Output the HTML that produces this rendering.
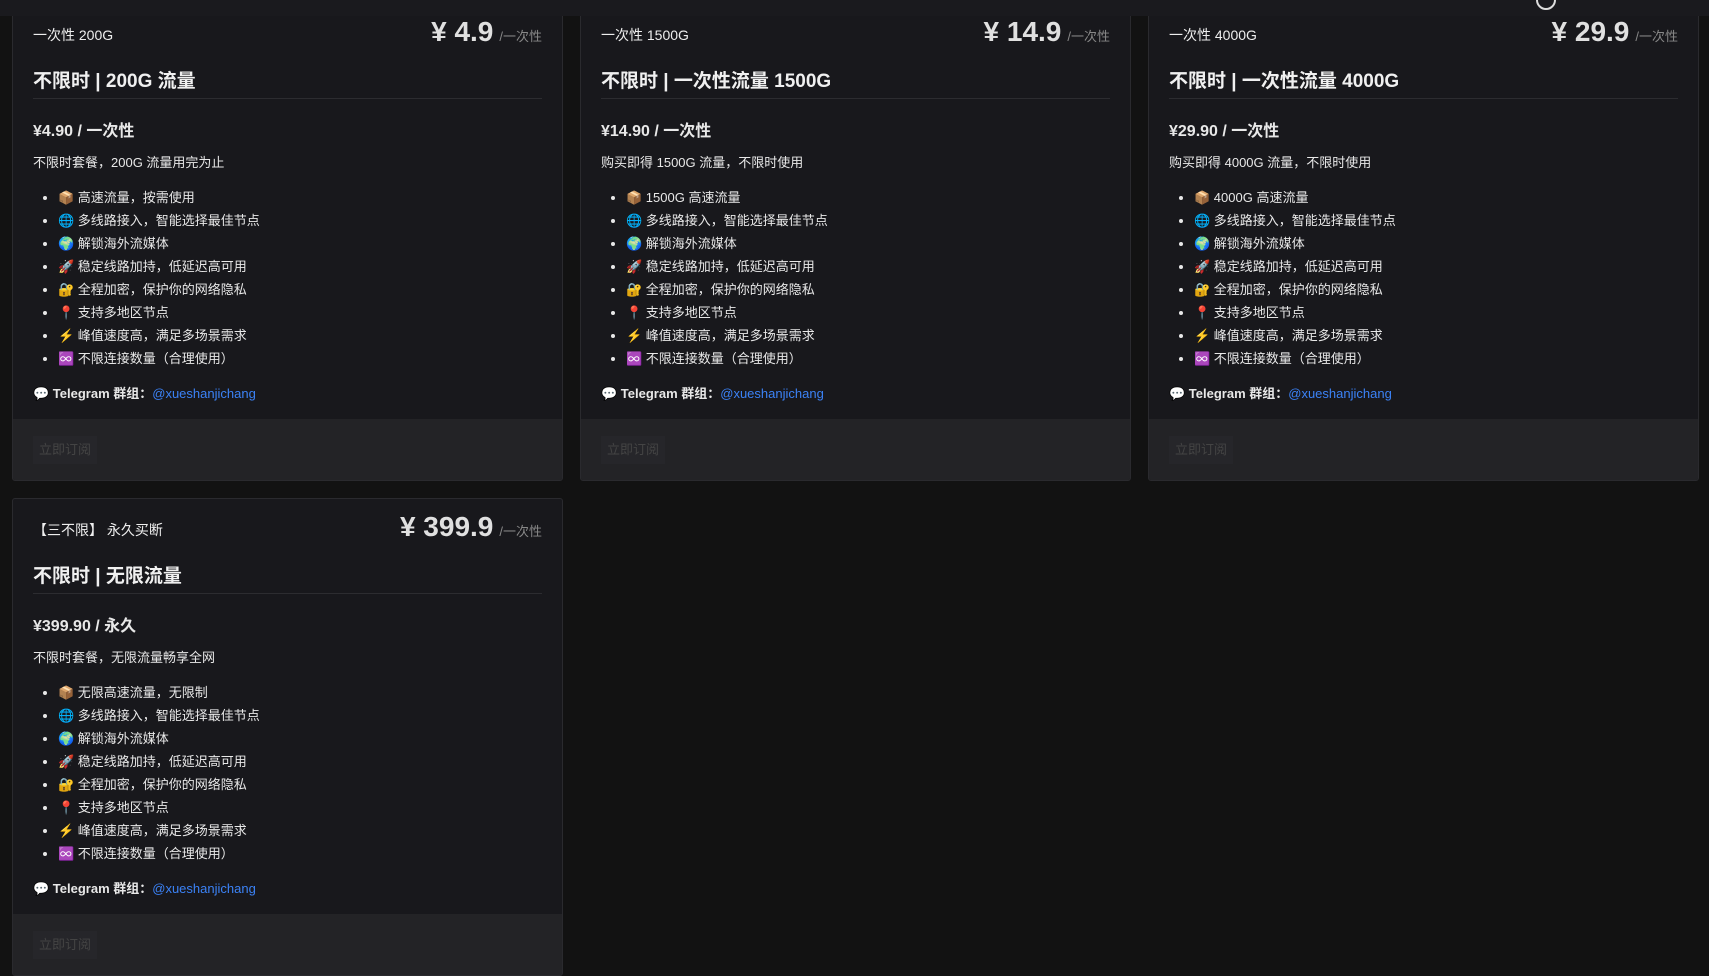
<!DOCTYPE html>
<html><head><meta charset="utf-8"><style>
*{box-sizing:border-box;margin:0;padding:0}
body{width:1709px;height:851px;overflow:hidden;background:#121212;font-family:"Liberation Sans","Noto Sans CJK SC",sans-serif;color:#e8e8e8;position:relative}
.top{position:absolute;left:0;top:0;width:1709px;height:16px;background:#1a1a1e;z-index:5}
.top i{position:absolute;left:1536px;top:-10px;width:20px;height:20px;border:2px solid #ddd;border-radius:50%}
.card{position:absolute;width:551px;height:478px;background:#18181c;border:1px solid #2a2a2e;border-radius:3px;overflow:hidden}
.in{position:absolute;left:20px;right:20px;top:0}
.sub{position:absolute;left:0;top:21px;font-size:14px;color:#eee}
.pr{position:absolute;right:0;top:12px;font-size:28px;font-weight:bold;color:#e0e0e0}
.pr small{font-size:13px;font-weight:normal;color:#888;margin-left:6px}
h2{position:absolute;left:0;right:0;top:62px;font-size:19px;font-weight:bold;padding-bottom:5px;border-bottom:1px solid #2c2c30;color:#f0f0f0}
.p{position:absolute;top:113px;font-size:16px;font-weight:bold}
.d{position:absolute;top:148px;font-size:13px}
ul{position:absolute;top:182px;left:25px;font-size:13px;list-style:disc}
ul li{height:23px;line-height:23px}
.tg{position:absolute;top:379px;font-size:13px;font-weight:bold}
.tg a{color:#3b82f6;font-weight:normal;text-decoration:none}
.ft{position:absolute;left:0;right:0;top:415px;height:64px;background:#232326}
.btn{position:absolute;left:20px;top:17px;width:64px;height:28px;background:#26262a;color:#444;font-size:13px;line-height:28px;text-align:center}
</style></head><body>
<div class="top"><i></i></div>

<div class="card" style="left:12px;top:3px">
<div class="in"><div class="sub">一次性 200G</div><div class="pr">¥ 4.9<small>/一次性</small></div>
<h2>不限时 | 200G 流量</h2><div class="p">¥4.90 / 一次性</div><div class="d">不限时套餐，200G 流量用完为止</div>
<ul><li>📦 高速流量，按需使用</li><li>🌐 多线路接入，智能选择最佳节点</li><li>🌍 解锁海外流媒体</li><li>🚀 稳定线路加持，低延迟高可用</li><li>🔐 全程加密，保护你的网络隐私</li><li>📍 支持多地区节点</li><li>⚡ 峰值速度高，满足多场景需求</li><li>♾️ 不限连接数量（合理使用）</li></ul>
<div class="tg">💬 Telegram 群组：<a>@xueshanjichang</a></div></div>
<div class="ft"><div class="btn">立即订阅</div></div></div>

<div class="card" style="left:580px;top:3px">
<div class="in"><div class="sub">一次性 1500G</div><div class="pr">¥ 14.9<small>/一次性</small></div>
<h2>不限时 | 一次性流量 1500G</h2><div class="p">¥14.90 / 一次性</div><div class="d">购买即得 1500G 流量，不限时使用</div>
<ul><li>📦 1500G 高速流量</li><li>🌐 多线路接入，智能选择最佳节点</li><li>🌍 解锁海外流媒体</li><li>🚀 稳定线路加持，低延迟高可用</li><li>🔐 全程加密，保护你的网络隐私</li><li>📍 支持多地区节点</li><li>⚡ 峰值速度高，满足多场景需求</li><li>♾️ 不限连接数量（合理使用）</li></ul>
<div class="tg">💬 Telegram 群组：<a>@xueshanjichang</a></div></div>
<div class="ft"><div class="btn">立即订阅</div></div></div>

<div class="card" style="left:1148px;top:3px">
<div class="in"><div class="sub">一次性 4000G</div><div class="pr">¥ 29.9<small>/一次性</small></div>
<h2>不限时 | 一次性流量 4000G</h2><div class="p">¥29.90 / 一次性</div><div class="d">购买即得 4000G 流量，不限时使用</div>
<ul><li>📦 4000G 高速流量</li><li>🌐 多线路接入，智能选择最佳节点</li><li>🌍 解锁海外流媒体</li><li>🚀 稳定线路加持，低延迟高可用</li><li>🔐 全程加密，保护你的网络隐私</li><li>📍 支持多地区节点</li><li>⚡ 峰值速度高，满足多场景需求</li><li>♾️ 不限连接数量（合理使用）</li></ul>
<div class="tg">💬 Telegram 群组：<a>@xueshanjichang</a></div></div>
<div class="ft"><div class="btn">立即订阅</div></div></div>

<div class="card" style="left:12px;top:498px">
<div class="in"><div class="sub">【三不限】 永久买断</div><div class="pr">¥ 399.9<small>/一次性</small></div>
<h2>不限时 | 无限流量</h2><div class="p">¥399.90 / 永久</div><div class="d">不限时套餐，无限流量畅享全网</div>
<ul><li>📦 无限高速流量，无限制</li><li>🌐 多线路接入，智能选择最佳节点</li><li>🌍 解锁海外流媒体</li><li>🚀 稳定线路加持，低延迟高可用</li><li>🔐 全程加密，保护你的网络隐私</li><li>📍 支持多地区节点</li><li>⚡ 峰值速度高，满足多场景需求</li><li>♾️ 不限连接数量（合理使用）</li></ul>
<div class="tg">💬 Telegram 群组：<a>@xueshanjichang</a></div></div>
<div class="ft"><div class="btn">立即订阅</div></div></div>
</body></html>
